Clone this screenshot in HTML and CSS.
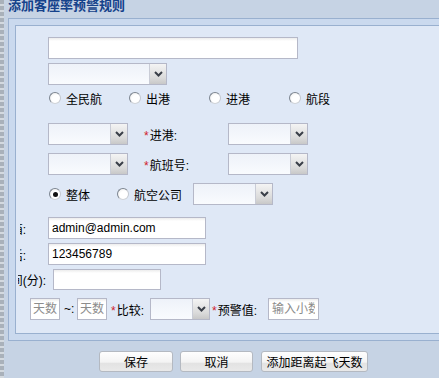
FILE: index.html
```html
<!DOCTYPE html>
<html lang="zh-CN">
<head>
  <meta charset="UTF-8" />
  <title>添加客座率预警规则</title>
  <link rel="stylesheet" href="styles.css">
</head>
<body>
  <div class="shell">
    <div class="edge"></div>
    <div class="win">
      <div class="win-title">添加客座率预警规则</div>
      <div class="frame">
        <div class="panel">
          <form class="form">
            <div class="row row-a">
              <input class="txt txt-name" type="text">
            </div>
            <div class="row row-b">
              <div class="combo combo-type">
                <span class="combo-field"></span>
                <span class="combo-btn"><svg width="9" height="6" viewBox="0 0 9 6"><path d="M1 1 L4.5 4.5 L8 1" fill="none" stroke="#3a3f48" stroke-width="2"/></svg></span>
              </div>
            </div>
            <div class="row row-c radios">
              <label class="radio"><span class="dot"></span>全民航</label>
              <label class="radio"><span class="dot"></span>出港</label>
              <label class="radio"><span class="dot"></span>进港</label>
              <label class="radio"><span class="dot"></span>航段</label>
            </div>
            <div class="row row-d">
              <div class="combo">
                <span class="combo-field"></span>
                <span class="combo-btn"><svg width="9" height="6" viewBox="0 0 9 6"><path d="M1 1 L4.5 4.5 L8 1" fill="none" stroke="#3a3f48" stroke-width="2"/></svg></span>
              </div>
              <span class="flabel"><i class="req">*</i>进港:</span>
              <div class="combo">
                <span class="combo-field"></span>
                <span class="combo-btn"><svg width="9" height="6" viewBox="0 0 9 6"><path d="M1 1 L4.5 4.5 L8 1" fill="none" stroke="#3a3f48" stroke-width="2"/></svg></span>
              </div>
            </div>
            <div class="row row-e">
              <div class="combo">
                <span class="combo-field"></span>
                <span class="combo-btn"><svg width="9" height="6" viewBox="0 0 9 6"><path d="M1 1 L4.5 4.5 L8 1" fill="none" stroke="#3a3f48" stroke-width="2"/></svg></span>
              </div>
              <span class="flabel"><i class="req">*</i>航班号:</span>
              <div class="combo">
                <span class="combo-field"></span>
                <span class="combo-btn"><svg width="9" height="6" viewBox="0 0 9 6"><path d="M1 1 L4.5 4.5 L8 1" fill="none" stroke="#3a3f48" stroke-width="2"/></svg></span>
              </div>
            </div>
            <div class="row row-f">
              <label class="radio radio-whole"><span class="dot on"></span>整体</label>
              <label class="radio radio-air"><span class="dot"></span>航空公司</label>
              <div class="combo">
                <span class="combo-field"></span>
                <span class="combo-btn"><svg width="9" height="6" viewBox="0 0 9 6"><path d="M1 1 L4.5 4.5 L8 1" fill="none" stroke="#3a3f48" stroke-width="2"/></svg></span>
              </div>
            </div>
            <div class="row row-g">
              <span class="lbl lbl-short"><span class="lbl-text">联系邮箱:</span></span>
              <input class="txt txt-mid" type="text" value="admin@admin.com">
            </div>
            <div class="row row-h">
              <span class="lbl lbl-short"><span class="lbl-text">联系电话:</span></span>
              <input class="txt txt-mid" type="text" value="123456789">
            </div>
            <div class="row row-i">
              <span class="lbl lbl-long"><span class="lbl-text">提前时间(分):</span></span>
              <input class="txt txt-min" type="text">
            </div>
            <div class="row row-j">
              <input class="txt txt-days" type="text" placeholder="天数">
              <span class="tilde">~:</span>
              <input class="txt txt-days" type="text" placeholder="天数">
              <span class="flabel flabel-cmp"><i class="req">*</i>比较:</span>
              <div class="combo combo-cmp">
                <span class="combo-field"></span>
                <span class="combo-btn"><svg width="9" height="6" viewBox="0 0 9 6"><path d="M1 1 L4.5 4.5 L8 1" fill="none" stroke="#3a3f48" stroke-width="2"/></svg></span>
              </div>
              <span class="flabel flabel-warn"><i class="req">*</i>预警值:</span>
              <input class="txt txt-warn" type="text" placeholder="输入小数">
            </div>
          </form>
        </div>
      </div>
      <div class="win-foot">
        <button class="btn btn-save" type="button">保存</button>
        <button class="btn btn-cancel" type="button">取消</button>
        <button class="btn btn-add" type="button">添加距离起飞天数</button>
      </div>
    </div>
  </div>
</body>
</html>
```

FILE: styles.css
```css
/* Reset */
* {
  margin: 0;
  padding: 0;
  box-sizing: border-box;
}
html, body {
  height: 100%;
  overflow: hidden;
}
body {
  font-family: "Liberation Sans", "Noto Sans CJK SC", sans-serif;
  font-size: 12px;
  color: #000;
  background-color: #c6d3e4;
}
.shell {
  display: flex;
  height: 100%;
}
/* grey dashed strip on the far left */
.edge {
  width: 4px;
  flex: none;
  background: repeating-linear-gradient(to bottom, #a9b1ba 0, #a9b1ba 4px, #d3d9df 4px, #d3d9df 6px);
}
.win {
  flex: 1;
  min-width: 0;
  background-color: #c6d3e4;
}
/* Window title */
.win-title {
  height: 18px;
  line-height: 10px;
  padding-left: 4px;
  font-size: 13px;
  font-weight: bold;
  color: #15428b;
  white-space: nowrap;
  font-family: "Noto Sans CJK SC", sans-serif;
}
/* Frame and panel */
.frame {
  margin-left: 4px;
  border-top: 1px solid #99b0cf;
  border-left: 1px solid #99b0cf;
  border-bottom: 1px solid #99b0cf;
  padding: 6px 0 6px 6px;
  background-color: #cad9ee;
}
.panel {
  height: 309px;
  border: 1px solid #99b0cf;
  border-right: none;
  background-color: #dfe8f6;
  overflow: hidden;
}
.form {
  padding-top: 11px;
}
.row {
  display: flex;
  align-items: center;
  height: 22px;
  white-space: nowrap;
}
.row-b { margin-top: 4px; }
.row-c { margin-top: 2px; }
.row-d { margin-top: 14px; }
.row-e { margin-top: 8px; }
.row-f { margin-top: 8px; }
.row-g { margin-top: 12px; }
.row-h { margin-top: 4px; }
.row-i { margin-top: 4px; height: 21px; }
.row-j { margin-top: 8px; }
.row-a, .row-b, .row-d, .row-e {
  padding-left: 32px;
}
/* Text fields */
.txt {
  height: 22px;
  border: 1px solid #b5b8c8;
  background: #fff linear-gradient(to bottom, #ececec 0, #fff 3px);
  padding: 0 3px;
  font-family: "Liberation Sans", "Noto Sans CJK SC", sans-serif;
  font-size: 12px;
  color: #000;
  outline: none;
}
.txt::placeholder {
  color: #8c8c8c;
}
.txt-name {
  width: 250px;
}
.txt-mid {
  width: 158px;
  margin-left: 22px;
}
.txt-min {
  width: 108px;
  height: 21px;
  margin-left: 7px;
}
.txt-days {
  width: 30px;
  padding: 0 2px;
}
.row-j .txt-days:first-child {
  margin-left: 14px;
}
.txt-warn {
  width: 51px;
  margin-left: 4px;
}
/* Combo boxes */
.combo {
  display: flex;
  width: 80px;
  height: 22px;
  border: 1px solid #b5b8c8;
}
.combo-type {
  width: 119px;
}
.combo-cmp {
  width: 60px;
}
.combo-field {
  flex: 1;
  background: linear-gradient(to bottom, #eef2f9, #f9fbfe);
}
.combo-btn {
  width: 17px;
  display: flex;
  align-items: center;
  justify-content: center;
  border-left: 1px solid #c9ccd6;
  background: linear-gradient(to bottom, #f4f4f4, #dadada 70%, #c8c8c8);
}
/* Labels */
.flabel {
  margin-left: 16px;
  width: 84px;
}
.req {
  font-style: normal;
  color: #d0202a;
  margin-right: 1px;
}
/* right-aligned labels that are wider than their column: clip on the left */
.lbl {
  display: block;
  overflow: hidden;
  direction: rtl;
  text-align: right;
}
.lbl-text {
  display: inline-block;
  direction: ltr;
}
.lbl-short {
  width: 6px;
  margin-left: 4px;
}
.lbl-long {
  width: 28px;
  margin-left: 2px;
}
.tilde {
  margin-left: 4px;
  width: 13px;
}
.flabel-cmp {
  margin-left: 4px;
  width: 39px;
}
.flabel-warn {
  margin-left: 2px;
  width: 52px;
}
/* Radio buttons */
.radios {
  padding-left: 33px;
}
.radio {
  display: flex;
  align-items: center;
}
.radios .radio {
  width: 80px;
}
.dot {
  width: 12px;
  height: 12px;
  border-radius: 50%;
  border: 1px solid #7d8590;
  border-right-color: #c4c8cf;
  border-bottom-color: #d0d3d8;
  background: radial-gradient(circle at 60% 60%, #fff 45%, #e6e6e6 100%);
  margin-right: 5px;
  position: relative;
}
.dot.on::after {
  content: "";
  position: absolute;
  left: 2.5px;
  top: 2.5px;
  width: 5px;
  height: 5px;
  border-radius: 50%;
  background-color: #111;
}
.radio-whole {
  margin-left: 33px;
  width: 68px;
}
.radio-air {
  width: 76px;
}
/* Footer buttons */
.win-foot {
  display: flex;
  padding: 10px 0 0 95px;
}
.btn {
  height: 21px;
  border: 1px solid #b4b9c1;
  border-radius: 3px;
  background: linear-gradient(to bottom, #fefefe 0, #f3f3f3 55%, #e2e2e2 56%, #e9e9e9 100%);
  font-family: "Noto Sans CJK SC", sans-serif;
  font-size: 12px;
  color: #000;
  cursor: pointer;
}
.btn-save {
  width: 74px;
}
.btn-cancel {
  width: 73px;
  margin-left: 7px;
}
.btn-add {
  width: 107px;
  margin-left: 8px;
}
```
